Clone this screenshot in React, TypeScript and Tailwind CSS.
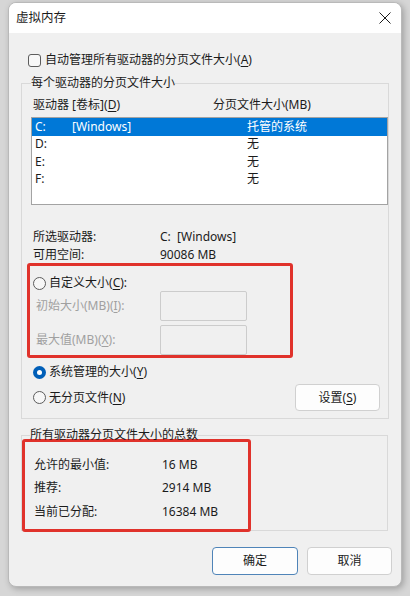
import React from "react";

const font = { fontFamily: '"Noto Sans", "Noto Sans CJK SC", sans-serif' };

function Radio({ checked = false }: { checked?: boolean }) {
  return checked ? (
    <span className="flex h-[13px] w-[13px] shrink-0 items-center justify-center rounded-full bg-[#005fb8]">
      <span className="h-[5px] w-[5px] rounded-full bg-white" />
    </span>
  ) : (
    <span className="h-[13px] w-[13px] shrink-0 rounded-full border border-[#5c5c5c] bg-[#f7f7f7]" />
  );
}

function Key({ k }: { k: string }) {
  return (
    <>
      (<u className="underline-offset-2">{k}</u>)
    </>
  );
}

const drives = [
  { d: "C:", label: "[Windows]", size: "托管的系统", sel: true },
  { d: "D:", label: "", size: "无", sel: false },
  { d: "E:", label: "", size: "无", sel: false },
  { d: "F:", label: "", size: "无", sel: false },
];

export default function App() {
  return (
    <div
      className="h-[596px] w-[410px] overflow-hidden bg-[#d6d6d6] pl-[8px] pt-[2px] text-[12px] text-[#1b1b1b]"
      style={font}
    >
      <div className="flex h-[585px] w-[394px] flex-col overflow-hidden rounded-[8px] border border-[#b9b9b9] bg-[#f0f0f0] shadow-[2px_2px_6px_rgba(0,0,0,0.25)]">
        {/* Title bar */}
        <div className="flex h-[30px] shrink-0 items-center justify-between bg-white pl-[7px] pr-[10px]">
          <span className="text-[12.5px] leading-[16px]">虚拟内存</span>
          <svg width="12" height="12" viewBox="0 0 12 12">
            <path d="M0.5 0.5 L11.5 11.5 M11.5 0.5 L0.5 11.5" stroke="#1b1b1b" strokeWidth="1" fill="none" />
          </svg>
        </div>

        {/* Body */}
        <div className="flex flex-col pl-[12px] pr-[13px]">
          <div className="mt-[20px] flex h-[14px] items-center gap-[4px] pl-[7px] leading-[14px]">
            <span className="h-[13px] w-[13px] rounded-[3px] border border-[#5c5c5c] bg-[#f7f7f7]" />
            <span>
              自动管理所有驱动器的分页文件大小<Key k="A" />
            </span>
          </div>

          {/* Group 1 */}
          <fieldset className="mt-[8px] border border-[#d9d9d9] pb-[7px] pl-[9px]">
            <legend className="px-0 leading-[16px]">每个驱动器的分页文件大小</legend>
            <div className="mt-[6px] flex h-[16px] items-center pl-[2px] leading-[16px]">
              <span className="w-[180px]">
                驱动器 [卷标]<Key k="D" />
              </span>
              <span>分页文件大小(MB)</span>
            </div>
            <div className="mt-[4px] h-[88px] w-[357px] border border-[#a3a3a3] bg-white">
              {drives.map((r) => (
                <div
                  key={r.d}
                  className={`flex h-[17.5px] items-center pl-[3px] leading-[16px] ${
                    r.sel ? "bg-[#0078d7] text-white" : ""
                  }`}
                >
                  <span className="w-[37px]">{r.d}</span>
                  <span className="w-[175px]">{r.label}</span>
                  <span>{r.size}</span>
                </div>
              ))}
            </div>

            <div className="mt-[23px] flex h-[18px] items-center pl-[2px] leading-[16px]">
              <span className="w-[127px]">所选驱动器:</span>
              <span>C:&nbsp;&nbsp;[Windows]</span>
            </div>
            <div className="flex h-[18px] items-center pl-[2px] leading-[16px]">
              <span className="w-[127px]">可用空间:</span>
              <span>90086 MB</span>
            </div>

            {/* Custom size (highlighted) */}
            <div className="-mt-[1px] -ml-[4px] h-[95px] w-[266px] rounded-[3px] border-[3px] border-[#e0322b]">
              <div className="mt-[10px] flex h-[14px] items-center gap-[3px] pl-[3px] leading-[14px]">
                <Radio />
                <span>
                  自定义大小<Key k="C" />:
                </span>
              </div>
              <div className="mt-[1px] flex h-[30px] items-center">
                <span className="w-[130px] pl-[6px] text-[#a0a0a0]">
                  初始大小(MB)<Key k="I" />:
                </span>
                <span className="h-[30px] w-[87px] rounded-[2px] border border-[#cccccc] bg-[#f0f0f0]" />
              </div>
              <div className="mt-[4px] flex h-[30px] items-center">
                <span className="w-[130px] pl-[6px] text-[#a0a0a0]">
                  最大值(MB)<Key k="X" />:
                </span>
                <span className="h-[30px] w-[87px] rounded-[2px] border border-[#cccccc] bg-[#f0f0f0]" />
              </div>
            </div>

            <div className="mt-[7px] flex h-[14px] items-center gap-[3px] pl-[2px] leading-[14px]">
              <Radio checked />
              <span>
                系统管理的大小<Key k="Y" />
              </span>
            </div>
            <div className="mt-[5px] flex h-[27px] items-center justify-between pl-[2px] pr-[8px]">
              <div className="flex items-center gap-[3px] leading-[14px]">
                <Radio />
                <span>
                  无分页文件<Key k="N" />
                </span>
              </div>
              <button className="h-[27px] w-[85px] rounded-[4px] border border-[#d0d0d0] bg-[#fdfdfd] leading-[16px]">
                设置<Key k="S" />
              </button>
            </div>
          </fieldset>

          {/* Group 2 */}
          <fieldset className="mt-[8px] border border-[#d9d9d9] pl-[9px]">
            <legend className="-ml-[1px] px-0 leading-[16px]">所有驱动器分页文件大小的总数</legend>
            <div className="-mt-[4px] -mb-[2px] -ml-[9px] h-[93px] w-[229px] rounded-[3px] border-[3px] border-[#e0322b] pl-[9px] pt-[11px]">
              {[
                ["允许的最小值:", "16 MB"],
                ["推荐:", "2914 MB"],
                ["当前已分配:", "16384 MB"],
              ].map(([k, v]) => (
                <div key={k} className="flex h-[23.5px] items-center leading-[16px]">
                  <span className="w-[128px]">{k}</span>
                  <span>{v}</span>
                </div>
              ))}
            </div>
          </fieldset>

          <div className="-mr-[4px] mt-[16px] flex justify-end gap-[9px]">
            <button className="h-[28px] w-[86px] rounded-[4px] border border-[#4f84b8] bg-[#fdfdfd] leading-[16px]">
              确定
            </button>
            <button className="h-[28px] w-[85px] rounded-[4px] border border-[#d0d0d0] bg-[#fdfdfd] leading-[16px]">
              取消
            </button>
          </div>
        </div>
      </div>
    </div>
  );
}
